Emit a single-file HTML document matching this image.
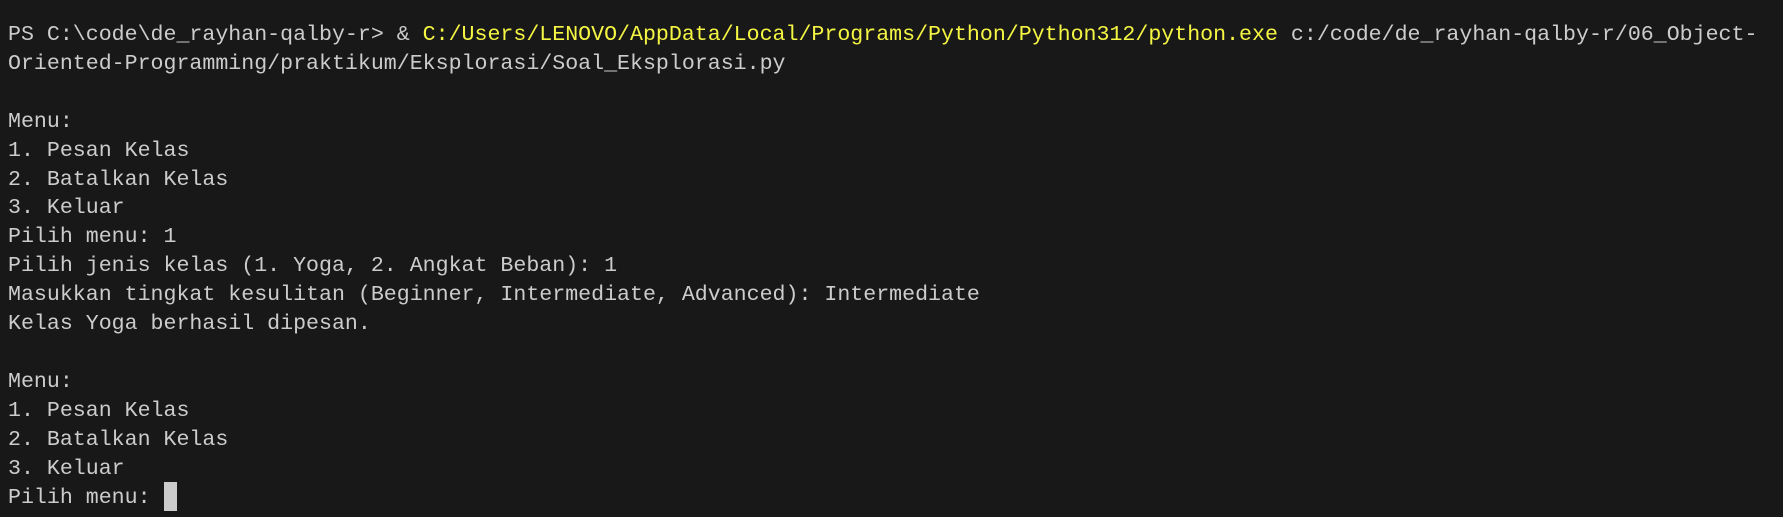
<!DOCTYPE html>
<html><head><meta charset="utf-8"><style>
html,body{margin:0;padding:0;background:#181818;width:1783px;height:517px;overflow:hidden}
pre{margin:0;position:absolute;left:8px;top:21px;font-family:"Liberation Mono",monospace;font-size:21.6px;line-height:28.9px;color:#cccccc;white-space:pre}
.y{color:#f5f543}
.c{display:inline-block;width:13px;height:29px;background:#cccccc;vertical-align:top;position:relative;top:-2px}
</style></head><body>
<pre>PS C:\code\de_rayhan-qalby-r&gt; &amp; <span class="y">C:/Users/LENOVO/AppData/Local/Programs/Python/Python312/python.exe</span> c:/code/de_rayhan-qalby-r/06_Object-
Oriented-Programming/praktikum/Eksplorasi/Soal_Eksplorasi.py

Menu:
1. Pesan Kelas
2. Batalkan Kelas
3. Keluar
Pilih menu: 1
Pilih jenis kelas (1. Yoga, 2. Angkat Beban): 1
Masukkan tingkat kesulitan (Beginner, Intermediate, Advanced): Intermediate
Kelas Yoga berhasil dipesan.

Menu:
1. Pesan Kelas
2. Batalkan Kelas
3. Keluar
Pilih menu: <span class="c"></span></pre>
</body></html>
